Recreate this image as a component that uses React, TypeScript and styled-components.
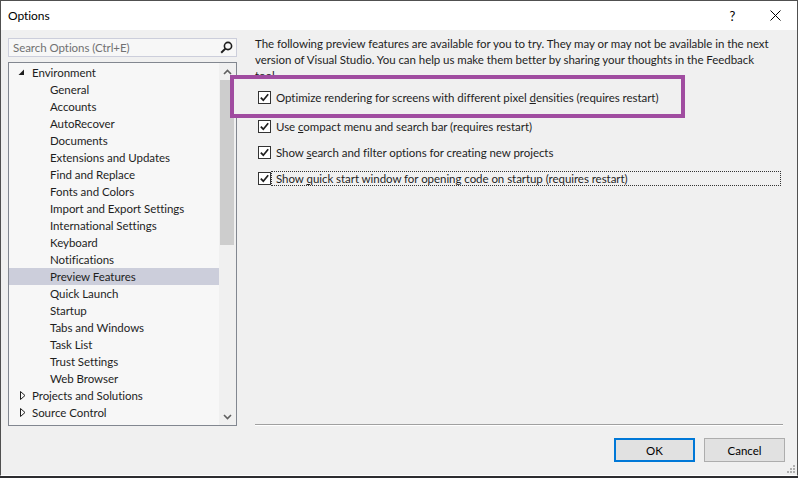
import React from 'react';
import styled, { createGlobalStyle } from 'styled-components';

const GlobalStyle = createGlobalStyle`
html, body {
	margin: 0;
	padding: 0;
	background: #2d2d30;
}
body {
	font-family: Lato, 'Segoe UI', 'Noto Sans', sans-serif;
	font-size: 11.5px;
	letter-spacing: -0.05px;
	color: #1e1e1e;
}
#root {
	width: 798px;
	height: 478px;
	overflow: hidden;
}
`

const Window = styled.div`
	position: relative;
	box-sizing: border-box;
	width: 798px;
	height: 476px;
	border: 1px solid #505050;
	border-bottom-color: #ffffff;
	display: flex;
	flex-direction: column;
	background: #f0f0f0;
`

const TitleBar = styled.div`
	height: 29px;
	flex: none;
	background: #ffffff;
	display: flex;
	align-items: center;
	padding-left: 7px;
`

const Title = styled.span`
	font-size: 12px;
	color: #000;
`

const CaptionButtons = styled.div`
	margin-left: auto;
	display: flex;
	height: 100%;
`

const CaptionButton = styled.div`
	width: 43px;
	height: 100%;
	display: flex;
	align-items: center;
	justify-content: center;
	font-size: 13px;
	color: #000;
`

const Body = styled.div`
	flex: 1;
	min-height: 0;
	display: grid;
	grid-template-columns: 229px minmax(0, 1fr);
	column-gap: 18px;
	padding: 8px 14px 0 7px;
`

const LeftColumn = styled.div`
	display: flex;
	flex-direction: column;
`

const SearchBox = styled.div`
	box-sizing: border-box;
	height: 19px;
	border: 1px solid #cccedb;
	background: #f7f7f7;
	display: flex;
	align-items: center;
	padding: 0 3px 0 4px;
`

const Placeholder = styled.span`
	flex: 1;
	color: #717171;
`

const TreeBox = styled.div`
	box-sizing: border-box;
	margin-top: 5px;
	height: 364px;
	border: 1px solid #828790;
	background: #f7f7f7;
	display: flex;
`

const TreeList = styled.div`
	flex: 1;
	padding-top: 1px;
	display: flex;
	flex-direction: column;
`

const TreeRow = styled.div<{ $level: number; $selected?: boolean }>`
	height: 17px;
	display: flex;
	align-items: center;
	padding-left: ${p => p.$level * 18 + 9}px;
	background: ${p => (p.$selected ? '#cccedb' : 'transparent')};
	white-space: nowrap;
`

const Expander = styled.span`
	width: 14px;
	flex: none;
	display: flex;
	align-items: center;
`

const ScrollBar = styled.div`
	width: 17px;
	flex: none;
	background: #f0f0f0;
	display: flex;
	flex-direction: column;
`

const ScrollArrow = styled.div`
	height: 17px;
	flex: none;
	display: flex;
	align-items: center;
	justify-content: center;
`

const ScrollTrack = styled.div`
	flex: 1;
	display: flex;
	flex-direction: column;
`

const ScrollThumb = styled.div`
	height: 165px;
	margin: 0 2px 0 1px;
	background: #cdcdcd;
`

const RightColumn = styled.div`
	min-width: 0;
	display: flex;
	flex-direction: column;
	padding-bottom: 13px;
`

const Intro = styled.p`
	margin: -2px 0 0;
	line-height: 16px;
	white-space: nowrap;
`

const Highlight = styled.div`
	position: relative;
	box-sizing: border-box;
	margin: -9px 0 0 -25px;
	width: 455px;
	height: 43px;
	border: 4px solid #a04ca0;
	background: #f0f0f0;
	padding: 10px 0 0 21px;
`

const OptionList = styled.div`
	display: flex;
	flex-direction: column;
	gap: 9px;
`

const OptionRow = styled.div`
	height: 17px;
	display: flex;
	align-items: center;
	padding-left: 3px;
`

const CheckBox = styled.span`
	box-sizing: border-box;
	width: 13px;
	height: 13px;
	flex: none;
	border: 1px solid #333333;
	background: #ffffff;
	display: flex;
	align-items: center;
	justify-content: center;
`

const OptionLabel = styled.span<{ $focused?: boolean }>`
	box-sizing: border-box;
	flex: 1;
	height: 15px;
	line-height: 13px;
	padding-left: 4px;
	margin-right: 2px;
	border: 1px dotted ${p => (p.$focused ? '#333333' : 'transparent')};
	white-space: nowrap;
`

const Spacer = styled.div`
	flex: 1;
`

const Separator = styled.div`
	border-top: 1px solid #a0a0a0;
	border-bottom: 1px solid #ffffff;
`

const ButtonRow = styled.div`
	margin: 12px -2px 0 0;
	display: flex;
	justify-content: flex-end;
	gap: 9px;
`

const Button = styled.button<{ $primary?: boolean }>`
	box-sizing: border-box;
	width: 81px;
	height: 24px;
	padding: 0;
	font: inherit;
	color: #000;
	background: #e1e1e1;
	border: 1px solid ${p => (p.$primary ? '#0078d7' : '#adadad')};
	box-shadow: ${p => (p.$primary ? 'inset 0 0 0 1px #0078d7' : 'none')};
`

const Grip = styled.svg`
	position: absolute;
	right: 2px;
	bottom: 2px;
`

const treeItems: { label: string; level: number; expander?: 'open' | 'closed'; selected?: boolean }[] = [
	{ label: 'Environment', level: 0, expander: 'open' },
	{ label: 'General', level: 1 },
	{ label: 'Accounts', level: 1 },
	{ label: 'AutoRecover', level: 1 },
	{ label: 'Documents', level: 1 },
	{ label: 'Extensions and Updates', level: 1 },
	{ label: 'Find and Replace', level: 1 },
	{ label: 'Fonts and Colors', level: 1 },
	{ label: 'Import and Export Settings', level: 1 },
	{ label: 'International Settings', level: 1 },
	{ label: 'Keyboard', level: 1 },
	{ label: 'Notifications', level: 1 },
	{ label: 'Preview Features', level: 1, selected: true },
	{ label: 'Quick Launch', level: 1 },
	{ label: 'Startup', level: 1 },
	{ label: 'Tabs and Windows', level: 1 },
	{ label: 'Task List', level: 1 },
	{ label: 'Trust Settings', level: 1 },
	{ label: 'Web Browser', level: 1 },
	{ label: 'Projects and Solutions', level: 0, expander: 'closed' },
	{ label: 'Source Control', level: 0, expander: 'closed' },
]

function Check() {
	return (
		<CheckBox>
			<svg width="11" height="11" viewBox="0 0 11 11">
				<path d="M1.8 5.6 L4.3 8.2 L9.2 2.2" fill="none" stroke="#1e1e1e" strokeWidth="1.7" />
			</svg>
		</CheckBox>
	)
}

function ExpanderIcon(props: { kind?: 'open' | 'closed' }) {
	if (props.kind === 'open') {
		return (
			<svg width="7" height="7" viewBox="0 0 7 7">
				<polygon points="6,0.5 6,6 0.5,6" fill="#1e1e1e" />
			</svg>
		)
	}
	if (props.kind === 'closed') {
		return (
			<svg width="8" height="9" viewBox="0 0 8 9" style={{ marginLeft: 2 }}>
				<polygon points="0.5,0.5 5,4.5 0.5,8.5" fill="none" stroke="#1e1e1e" strokeWidth="1" />
			</svg>
		)
	}
	return null
}

export default function App() {
	return (
		<>
			<GlobalStyle />
			<Window>
				<TitleBar>
					<Title>Options</Title>
					<CaptionButtons>
						<CaptionButton>?</CaptionButton>
						<CaptionButton>
							<svg width="11" height="11" viewBox="0 0 11 11">
								<path d="M0.5 0.5 L10.5 10.5 M10.5 0.5 L0.5 10.5" stroke="#000" strokeWidth="1" />
							</svg>
						</CaptionButton>
					</CaptionButtons>
				</TitleBar>
				<Body>
					<LeftColumn>
						<SearchBox>
							<Placeholder>Search Options (Ctrl+E)</Placeholder>
							<svg width="13" height="13" viewBox="0 0 13 13">
								<circle cx="8" cy="5" r="3.6" fill="none" stroke="#1e1e1e" strokeWidth="1.6" />
								<path d="M5.4 7.6 L1.2 11.8" stroke="#1e1e1e" strokeWidth="2" />
							</svg>
						</SearchBox>
						<TreeBox>
							<TreeList>
								{treeItems.map(item => (
									<TreeRow key={item.label} $level={item.level} $selected={item.selected}>
										{item.level === 0 ? (
											<Expander>
												<ExpanderIcon kind={item.expander} />
											</Expander>
										) : (
											<Expander />
										)}
										{item.label}
									</TreeRow>
								))}
							</TreeList>
							<ScrollBar>
								<ScrollArrow>
									<svg width="9" height="6" viewBox="0 0 9 6">
										<path d="M1 5 L4.5 1.5 L8 5" fill="none" stroke="#606060" strokeWidth="1.6" />
									</svg>
								</ScrollArrow>
								<ScrollTrack>
									<ScrollThumb />
								</ScrollTrack>
								<ScrollArrow>
									<svg width="9" height="6" viewBox="0 0 9 6">
										<path d="M1 1 L4.5 4.5 L8 1" fill="none" stroke="#606060" strokeWidth="1.6" />
									</svg>
								</ScrollArrow>
							</ScrollBar>
						</TreeBox>
					</LeftColumn>
					<RightColumn>
						<Intro>
							The following preview features are available for you to try. They may or may not be available in the next
							<br />
							version of Visual Studio. You can help us make them better by sharing your thoughts in the Feedback
							<br />
							tool.
						</Intro>
						<Highlight>
							<OptionRow>
								<Check />
								<OptionLabel>
									Optimize rendering for screens with different pixel <u>d</u>ensities (requires restart)
								</OptionLabel>
							</OptionRow>
						</Highlight>
						<OptionList>
							<OptionRow>
								<Check />
								<OptionLabel>
									Use <u>c</u>ompact menu and search bar (requires restart)
								</OptionLabel>
							</OptionRow>
							<OptionRow>
								<Check />
								<OptionLabel>
									Show <u>s</u>earch and filter options for creating new projects
								</OptionLabel>
							</OptionRow>
							<OptionRow>
								<Check />
								<OptionLabel $focused>
									Show <u>q</u>uick start window for opening code on startup (requires restart)
								</OptionLabel>
							</OptionRow>
						</OptionList>
						<Spacer />
						<Separator />
						<ButtonRow>
							<Button $primary>OK</Button>
							<Button>Cancel</Button>
						</ButtonRow>
					</RightColumn>
				</Body>
				<Grip width="9" height="9" viewBox="0 0 9 9">
					{[
						[7, 1], [7, 4], [4, 4], [7, 7], [4, 7], [1, 7],
					].map(([x, y]) => (
						<rect key={`${x}-${y}`} x={x} y={y} width="2" height="2" fill="#b0b0b0" />
					))}
				</Grip>
			</Window>
		</>
	)
}
